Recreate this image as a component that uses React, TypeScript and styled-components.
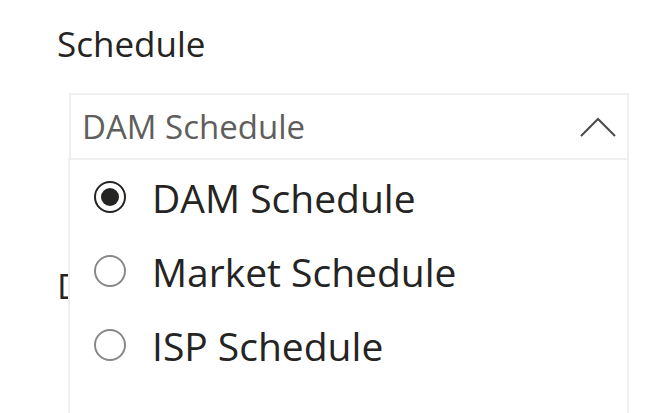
import React from "react";
import styled, { createGlobalStyle } from "styled-components";

const Global = createGlobalStyle`
  html, body { margin: 0; padding: 0; background: #ffffff; }
  body { width: 652px; height: 413px; overflow: hidden; }
`;

const Page = styled.div`
  position: relative;
  width: 652px;
  height: 413px;
  font-family: "Open Sans", "Noto Sans", sans-serif;
  padding-top: 22px;
  box-sizing: border-box;
`;

const Label = styled.div<{ $gap?: number }>`
  margin-left: 57px;
  margin-top: ${(p) => p.$gap ?? 0}px;
  font-family: "Open Sans", sans-serif;
  font-size: 35px;
  line-height: 44px;
  color: #252423;
`;

const Slicer = styled.div`
  position: relative;
  margin: 27px 0 0 69px;
  width: 560px;
`;

const Header = styled.div`
  height: 67px;
  box-sizing: border-box;
  border: 2px solid #efefef;
  display: flex;
  align-items: center;
  justify-content: space-between;
  padding: 0 10px 0 11px;
`;

const HeaderText = styled.span`
  font-size: 33px;
  color: #605e5c;
`;

const Chevron = styled.svg`
  width: 38px;
  height: 22px;
  display: block;
`;

const Panel = styled.div`
  position: absolute;
  top: 65px;
  left: -1px;
  width: 561px;
  height: 260px;
  box-sizing: border-box;
  background: #ffffff;
  border: 2px solid #efefef;
  display: flex;
  flex-direction: column;
  z-index: 2;
`;

const Option = styled.div`
  height: 74px;
  display: flex;
  align-items: center;
  padding-left: 24px;
  gap: 26px;
  font-size: 39px;
  color: #252423;
`;

const Radio = styled.span<{ $on?: boolean }>`
  width: 32px;
  height: 32px;
  box-sizing: border-box;
  border-radius: 50%;
  border: 2px solid ${(p) => (p.$on ? "#252423" : "#8a8886")};
  display: flex;
  align-items: center;
  justify-content: center;
  flex: none;
  &::after {
    content: "";
    display: ${(p) => (p.$on ? "block" : "none")};
    width: 18px;
    height: 18px;
    border-radius: 50%;
    background: #252423;
  }
`;

const options = ["DAM Schedule", "Market Schedule", "ISP Schedule"];

export default function App() {
  return (
    <Page>
      <Global />
      <Label>Schedule</Label>
      <Slicer>
        <Header>
          <HeaderText>DAM Schedule</HeaderText>
          <Chevron viewBox="0 0 38 22">
            <polyline points="2,20 19,3 36,20" fill="none" stroke="#4a4a4a" strokeWidth="2" />
          </Chevron>
        </Header>
        <Panel>
          {options.map((o, i) => (
            <Option key={o}>
              <Radio $on={i === 0} />
              <span>{o}</span>
            </Option>
          ))}
        </Panel>
      </Slicer>
      <Label $gap={104}>Date</Label>
    </Page>
  );
}
